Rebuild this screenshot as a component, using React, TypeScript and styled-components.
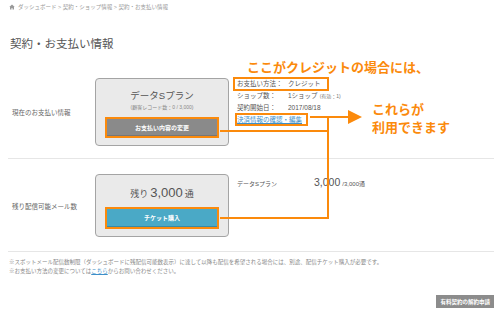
import React from "react"
import styled, { createGlobalStyle } from "styled-components"

const ORANGE = "#fb8a0c"

const GlobalStyle = createGlobalStyle`
    html, body {
        margin: 0;
        padding: 0;
        background: #fff;
    }
    body {
        font-family: "Liberation Sans", "Noto Sans CJK JP", sans-serif;
        color: #555;
    }
`

const Page = styled.div`
    position: relative;
    width: 500px;
    height: 316px;
    overflow: hidden;
    box-sizing: border-box;
    padding: 0 6px 0 8px;
    display: flex;
    flex-direction: column;
`

const Breadcrumb = styled.div`
    height: 14px;
    display: flex;
    align-items: center;
    gap: 3px;
    padding-left: 1px;
    font-size: 5.5px;
    color: #9a9a9a;
`

const Title = styled.h1`
    margin: 22px 0 8px;
    padding-left: 2px;
    line-height: 16px;
    font-size: 11.5px;
    font-weight: normal;
    color: #555;
`

const Section = styled.section<{ $top: number; $bottom: number }>`
    display: flex;
    align-items: center;
    padding: ${p => p.$top}px 0 ${p => p.$bottom}px;
    border-bottom: 1px solid #e6e6e6;
`

const RowLabel = styled.div`
    width: 87px;
    box-sizing: border-box;
    padding-left: 4px;
    font-size: 6.5px;
    color: #666;
`

const Card = styled.div<{ $pt: number }>`
    width: 134px;
    box-sizing: border-box;
    border: 1px solid #a4a4a4;
    border-radius: 4px;
    background: #eaeaea;
    padding: ${p => p.$pt}px 11px 9px;
    display: flex;
    flex-direction: column;
    align-items: center;
`

const PlanName = styled.div`
    font-size: 9.5px;
    line-height: 12px;
    color: #555;
`

const PlanSub = styled.div`
    margin-top: 1px;
    font-size: 5px;
    line-height: 8px;
    color: #888;
`

const Remain = styled.div`
    height: 16px;
    display: flex;
    align-items: baseline;
    gap: 2px;
    font-size: 9px;
    line-height: 16px;
    color: #555;
`

const RemainNum = styled.span`
    font-size: 13px;
`

const CardButton = styled.div<{ $tone: "gray" | "blue"; $h: number }>`
    margin-top: 8px;
    width: 100%;
    height: ${p => p.$h}px;
    box-sizing: border-box;
    display: flex;
    align-items: center;
    justify-content: center;
    font-size: 6px;
    font-weight: bold;
    color: #fff;
    background: ${p => (p.$tone === "blue" ? "#4aa9c6" : "#8a8a8a")};
    border-bottom: 1px solid ${p => (p.$tone === "blue" ? "#3a8aa3" : "#777")};
    outline: 2px solid ${ORANGE};
`

const Info = styled.div`
    align-self: flex-start;
    margin-left: 8px;
    font-size: 6.5px;
    line-height: 11.5px;
    color: #555;
`

const InfoRow = styled.div`
    display: flex;
    width: fit-content;
`

const Marked = styled.div<{ $l: number; $r: number }>`
    display: flex;
    width: fit-content;
    margin-left: -${p => p.$l}px;
    padding: 0 ${p => p.$r}px 0 ${p => p.$l}px;
    outline: 2px solid ${ORANGE};
    outline-offset: -1px;
`

const InfoKey = styled.span`
    width: 51px;
`

const Small = styled.span`
    font-size: 5px;
    color: #777;
    margin-left: 2px;
`

const Link = styled.a`
    color: #3d8fc9;
    text-decoration: underline;
`

const Stat = styled.div`
    align-self: flex-start;
    margin-left: 8px;
    padding-top: 2px;
    display: flex;
    align-items: baseline;
    color: #555;
`

const StatName = styled.span`
    width: 77px;
    font-size: 6px;
`

const StatNum = styled.span`
    font-size: 10.5px;
`

const StatTotal = styled.span`
    margin-left: 2px;
    font-size: 6px;
`

const Notes = styled.div`
    padding: 6px 0 0 1px;
    font-size: 5.5px;
    line-height: 9px;
    color: #888;
`

const CancelButton = styled.div`
    align-self: flex-end;
    margin-top: 19px;
    height: 13px;
    padding: 0 4px;
    display: flex;
    align-items: center;
    font-size: 5.5px;
    font-weight: bold;
    color: #fff;
    background: #8c8c8c;
`

const Overlay = styled.svg`
    position: absolute;
    left: 0;
    top: 0;
    pointer-events: none;
`

const Callout = styled.div<{ $x: number; $y: number }>`
    position: absolute;
    left: ${p => p.$x}px;
    top: ${p => p.$y}px;
    font-size: 13px;
    line-height: 18px;
    font-weight: bold;
    color: ${ORANGE};
    white-space: nowrap;
`

const HomeIcon = () => (
    <svg width="6" height="6" viewBox="0 0 12 12">
        <path d="M6 1 L11.5 6 H10 V11 H7 V8 H5 V11 H2 V6 H0.5 Z" fill="#9a9a9a" />
    </svg>
)

const App = () => {
    return (
        <Page>
            <GlobalStyle />
            <Breadcrumb>
                <HomeIcon />
                <span>ダッシュボード &gt; 契約・ショップ情報 &gt; 契約・お支払い情報</span>
            </Breadcrumb>
            <Title>契約・お支払い情報</Title>

            <Section $top={18} $bottom={12}>
                <RowLabel>現在のお支払い情報</RowLabel>
                <Card $pt={11}>
                    <PlanName>データSプラン</PlanName>
                    <PlanSub>(顧客レコード数：0 / 3,000)</PlanSub>
                    <CardButton $tone="gray" $h={17}>お支払い内容の変更</CardButton>
                </Card>
                <Info>
                    <Marked $l={3} $r={7}>
                        <InfoKey>お支払い方法：</InfoKey>
                        <span>クレジット</span>
                    </Marked>
                    <InfoRow>
                        <InfoKey>ショップ数：</InfoKey>
                        <span>1ショップ<Small>(有効：1)</Small></span>
                    </InfoRow>
                    <InfoRow>
                        <InfoKey>契約開始日：</InfoKey>
                        <span>2017/08/18</span>
                    </InfoRow>
                    <Marked $l={1} $r={5}>
                        <Link>決済情報の確認・編集</Link>
                    </Marked>
                </Info>
            </Section>

            <Section $top={15} $bottom={14}>
                <RowLabel>残り配信可能メール数</RowLabel>
                <Card $pt={10}>
                    <Remain>
                        <span>残り</span>
                        <RemainNum>3,000</RemainNum>
                        <span>通</span>
                    </Remain>
                    <CardButton $tone="blue" $h={18}>チケット購入</CardButton>
                </Card>
                <Stat>
                    <StatName>データSプラン</StatName>
                    <StatNum>3,000</StatNum>
                    <StatTotal>/3,000通</StatTotal>
                </Stat>
            </Section>

            <Notes>
                <div>※スポットメール配信数制限（ダッシュボードに残配信可能数表示）に達して以降も配信を希望される場合には、別途、配信チケット購入が必要です。</div>
                <div>※お支払い方法の変更については<Link>こちら</Link>からお問い合わせください。</div>
            </Notes>

            <CancelButton>有料契約の解約申請</CancelButton>

            <Overlay width="500" height="316">
                <g stroke={ORANGE} strokeWidth="2" fill="none">
                    <path d="M220 131 H329" />
                    <path d="M328 116 V219" />
                    <path d="M310 117 H350" />
                    <path d="M220 218 H329" />
                </g>
                <polygon points="348,110 362,117 348,124" fill={ORANGE} />
            </Overlay>

            <Callout $x={247} $y={59}>ここがクレジットの場合には、</Callout>
            <Callout $x={372} $y={101}>これらが</Callout>
            <Callout $x={372} $y={119}>利用できます</Callout>
        </Page>
    )
}

export default App
